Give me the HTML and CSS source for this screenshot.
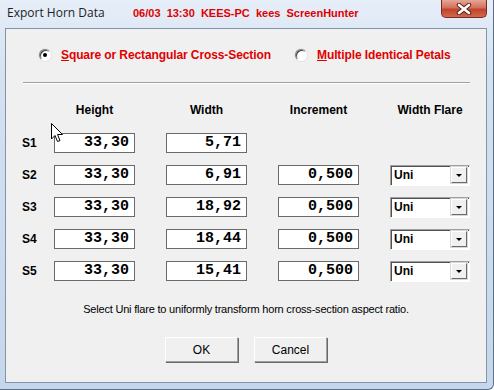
FILE: index.html
```html
<!DOCTYPE html>
<html lang="en">
<head>
  <meta charset="UTF-8" />
  <title>Export Horn Data</title>
  <link rel="stylesheet" href="styles.css">
</head>
<body>
  <div class="window">
    <div class="titlebar">
      <span class="title">Export Horn Data</span>
      <span class="stamp">06/03  13:30  KEES-PC  kees  ScreenHunter</span>
      <button class="close-btn" aria-label="Close">
        <svg width="16" height="12" viewBox="0 0 16 12">
          <path d="M3 2 L13 10 M13 2 L3 10" stroke="#5a2018" stroke-width="4.5" stroke-linecap="round" />
          <path d="M3 2 L13 10 M13 2 L3 10" stroke="#ffffff" stroke-width="2.6" stroke-linecap="round" />
        </svg>
      </button>
    </div>

    <div class="client">
      <div class="shape-choice">
        <label class="option option-first">
          <span class="radio checked"></span>
          <span class="option-text"><u>S</u>quare or Rectangular Cross-Section</span>
        </label>
        <label class="option">
          <span class="radio"></span>
          <span class="option-text"><u>M</u>ultiple Identical Petals</span>
        </label>
      </div>

      <div class="separator"></div>

      <div class="sections">
        <span></span>
        <span class="col-head">Height</span>
        <span class="col-head">Width</span>
        <span class="col-head">Increment</span>
        <span class="col-head col-head-last">Width Flare</span>

        <span class="row-label">S1</span>
        <span class="field">33,30</span>
        <span class="field">5,71</span>
        <span></span>
        <span></span>

        <span class="row-label">S2</span>
        <span class="field">33,30</span>
        <span class="field">6,91</span>
        <span class="field">0,500</span>
        <span class="combo"><span class="combo-value">Uni</span><span class="combo-btn"></span></span>

        <span class="row-label">S3</span>
        <span class="field">33,30</span>
        <span class="field">18,92</span>
        <span class="field">0,500</span>
        <span class="combo"><span class="combo-value">Uni</span><span class="combo-btn"></span></span>

        <span class="row-label">S4</span>
        <span class="field">33,30</span>
        <span class="field">18,44</span>
        <span class="field">0,500</span>
        <span class="combo"><span class="combo-value">Uni</span><span class="combo-btn"></span></span>

        <span class="row-label">S5</span>
        <span class="field">33,30</span>
        <span class="field">15,41</span>
        <span class="field">0,500</span>
        <span class="combo"><span class="combo-value">Uni</span><span class="combo-btn"></span></span>
      </div>

      <p class="hint">Select Uni flare to uniformly transform horn cross-section aspect ratio.</p>

      <div class="actions">
        <button class="dlg-btn">OK</button>
        <button class="dlg-btn">Cancel</button>
      </div>
    </div>

    <!-- mouse pointer captured in the shot -->
    <svg class="cursor" width="13" height="20" viewBox="0 0 13 20">
      <path d="M0.5 0.5 L0.5 16 L4 12.5 L6.5 18.5 L9 17.5 L6.5 11.5 L11.5 11.5 Z" fill="#ffffff" stroke="#000000" stroke-width="1" stroke-linejoin="miter" />
    </svg>
  </div>
</body>
</html>
```

FILE: styles.css
```css
body {
  margin: 0;
  background: #ffffff;
}

.window {
  position: relative;
  width: 494px;
  height: 390px;
  box-sizing: border-box;
  padding: 0 6px 6px 5px;
  display: flex;
  flex-direction: column;
  background: linear-gradient(180deg, #e6eef8 0%, #d3e1f1 20%, #c5d7ec 100%);
  border-right: 1px solid #5d6f84;
  border-bottom: 1px solid #5d6f84;
  border-bottom-right-radius: 6px;
}

.titlebar {
  height: 28px;
  display: flex;
  align-items: flex-start;
  flex-shrink: 0;
}

.title {
  width: 126px;
  padding-left: 2px;
  padding-top: 5px;
  font-family: "Open Sans", sans-serif;
  font-size: 12px;
  line-height: 16px;
  color: #1e1e1e;
}

.stamp {
  padding-top: 5px;
  white-space: pre;
  font-family: "Liberation Sans", Arial, sans-serif;
  font-weight: bold;
  font-size: 11px;
  line-height: 16px;
  color: #e00000;
}

.close-btn {
  margin-left: auto;
  width: 46px;
  height: 18px;
  padding: 0;
  border: 1px solid #7a2a20;
  border-top: none;
  border-radius: 0 0 5px 5px;
  background: linear-gradient(180deg, #e7a597 0%, #d3705c 45%, #c0442c 55%, #cf6a4f 100%);
  display: flex;
  align-items: center;
  justify-content: center;
}

.client {
  flex: 1;
  background: #f0f0f0;
  border: 1px solid #8393a8;
  font-family: "Liberation Sans", Arial, sans-serif;
  color: #000000;
}

.shape-choice {
  display: flex;
  align-items: center;
  height: 16px;
  margin-top: 18px;
  padding-left: 33px;
}

.option {
  display: flex;
  align-items: center;
}

.option-first {
  width: 256px;
}

.radio {
  position: relative;
  width: 12px;
  height: 12px;
  box-sizing: border-box;
  border-radius: 50%;
  border: 1px solid;
  border-color: #808080 #ffffff #ffffff #808080;
  background: #ffffff;
  box-shadow: inset 1px 1px 0 #404040, 0 0 0 1px #e3e3e3;
}

.radio.checked::after {
  content: '';
  position: absolute;
  top: 3px;
  left: 3px;
  width: 4px;
  height: 4px;
  border-radius: 50%;
  background: #000000;
}

.option-text {
  margin-left: 10px;
  font-weight: bold;
  font-size: 12px;
  letter-spacing: -0.1px;
  color: #e00000;
}

.separator {
  margin: 19px 0 0 17px;
  width: 447px;
  height: 1px;
  background: #a0a0a0;
  border-bottom: 1px solid #ffffff;
}

.sections {
  display: grid;
  grid-template-columns: 32px 112px 112px 112px 80px;
  grid-template-rows: 18px repeat(5, 20px);
  row-gap: 12px;
  margin-top: 19px;
  padding-left: 16px;
  align-items: center;
}

.col-head {
  align-self: start;
  width: 81px;
  text-align: center;
  font-weight: bold;
  font-size: 12px;
  line-height: 14px;
}

.col-head-last {
  width: 80px;
}

.row-label {
  font-weight: bold;
  font-size: 12px;
}

.field {
  width: 81px;
  height: 20px;
  box-sizing: border-box;
  border: 1px solid #6a6a6a;
  background: #ffffff;
  padding-right: 5px;
  text-align: right;
  font-family: "Liberation Mono", monospace;
  font-weight: bold;
  font-size: 15px;
  line-height: 18px;
}

.combo {
  width: 80px;
  height: 21px;
  box-sizing: border-box;
  display: flex;
  align-items: center;
  border: 1px solid;
  border-color: #a0a0a0 #ffffff #ffffff #a0a0a0;
  box-shadow: inset 1px 1px 0 #505050;
  background: #ffffff;
  padding: 2px 2px 2px 3px;
}

.combo-value {
  flex: 1;
  font-weight: bold;
  font-size: 12px;
}

.combo-btn {
  position: relative;
  width: 16px;
  height: 16px;
  box-sizing: border-box;
  background: #f0f0f0;
  border: 1px solid;
  border-color: #ffffff #696969 #696969 #ffffff;
  box-shadow: 0 0 0 1px #d8d8d8;
}

.combo-btn::after {
  content: '';
  position: absolute;
  left: 4px;
  top: 6px;
  border-left: 3px solid transparent;
  border-right: 3px solid transparent;
  border-top: 3px solid #000000;
}

.hint {
  margin: 21px 0 0;
  text-align: center;
  font-size: 11px;
  letter-spacing: -0.2px;
  line-height: 14px;
}

.actions {
  display: flex;
  justify-content: center;
  gap: 16px;
  margin-top: 21px;
}

.dlg-btn {
  width: 73px;
  height: 25px;
  box-sizing: border-box;
  background: #f0f0f0;
  border: 1px solid;
  border-color: #ffffff #a0a0a0 #a0a0a0 #ffffff;
  box-shadow: 1px 1px 0 #696969;
  font-family: "Liberation Sans", Arial, sans-serif;
  font-size: 12px;
  color: #000000;
  padding: 0;
}

.cursor {
  position: absolute;
  left: 51px;
  top: 123px;
}
```
